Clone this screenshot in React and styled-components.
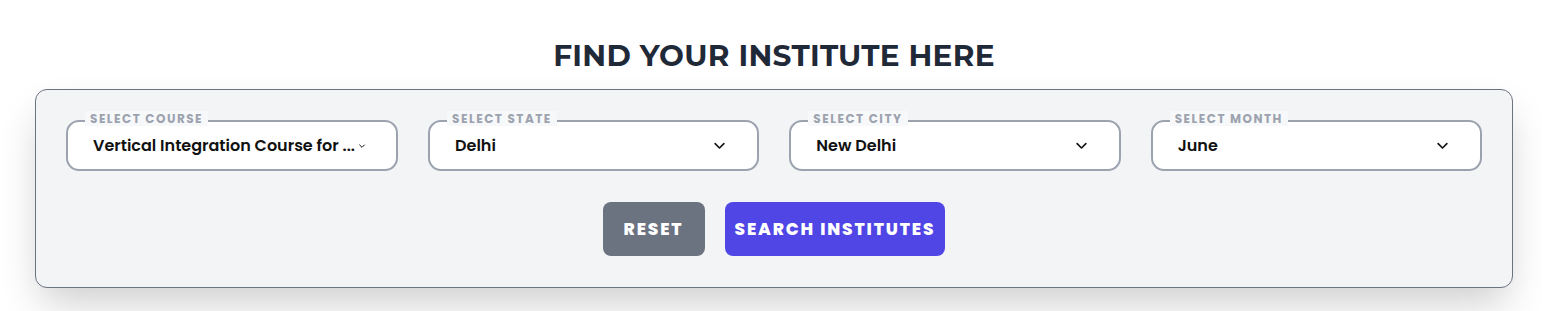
import React from "react";
import styled, { createGlobalStyle } from "styled-components";

const Global = createGlobalStyle`
  html, body { margin: 0; padding: 0; background: #ffffff; }
  * { box-sizing: border-box; }
`;

const Page = styled.div`
  padding: 37px 29px 30px 35px;
  font-family: "Poppins", "Inter", "Liberation Sans", sans-serif;
`;

const Heading = styled.h2`
  margin: 0 0 16px;
  text-align: center;
  font-family: "Montserrat", "Inter", "Liberation Sans", sans-serif;
  font-weight: 700;
  font-size: 29.5px;
  line-height: 36px;
  color: #1f2937;
  letter-spacing: 0.3px;
`;

const Card = styled.div`
  background: #f3f4f6;
  border: 1px solid #6b7280;
  border-radius: 12px;
  padding: 30px 30px 31px;
  box-shadow: 0 20px 40px -6px rgba(0, 0, 0, 0.2);
`;

const Grid = styled.div`
  display: grid;
  grid-template-columns: repeat(4, 1fr);
  gap: 30px;
`;

const Field = styled.div`
  position: relative;
  height: 51px;
  background: #ffffff;
  border: 2px solid #9ca3af;
  border-radius: 13px;
  display: flex;
  align-items: center;
  padding: 0 30px 0 25px;
`;

const Label = styled.span`
  position: absolute;
  top: -11px;
  left: 17px;
  padding: 0 5px;
  background: #f7f8f9;
  font-size: 12px;
  line-height: 15px;
  font-weight: 700;
  letter-spacing: 1.5px;
  color: #9ca3af;
`;

const Value = styled.span`
  flex: ${(p) => (p.$shrink ? "0 1 auto" : "1")};
  min-width: 0;
  white-space: nowrap;
  overflow: hidden;
  text-overflow: ellipsis;
  font-size: 16px;
  font-weight: 600;
  color: #111111;
`;

const Chevron = ({ small }) => (
  <svg
    width={small ? 8 : 15}
    height={small ? 8 : 15}
    viewBox="0 0 24 24"
    fill="none"
    stroke="#111"
    strokeWidth={small ? 3 : 2.6}
    strokeLinecap="round"
    strokeLinejoin="round"
    style={{ flexShrink: 0, marginLeft: small ? 3 : 8 }}
  >
    <path d="M5 9l7 7 7-7" />
  </svg>
);

const Buttons = styled.div`
  display: flex;
  justify-content: center;
  gap: 20px;
  margin-top: 31px;
`;

const Button = styled.button`
  height: 54px;
  padding: 0 ${(p) => (p.$primary ? "10px" : "21px")};
  border: none;
  border-radius: 8px;
  background: ${(p) => (p.$primary ? "#4f46e5" : "#6b7280")};
  color: #ffffff;
  font-family: "Poppins", "Inter", "Liberation Sans", sans-serif;
  font-size: 17px;
  font-weight: 800;
  letter-spacing: 1.85px;
  cursor: pointer;
`;

const fields = [
  { label: "SELECT COURSE", value: "Vertical Integration Course for ...", small: true },
  { label: "SELECT STATE", value: "Delhi" },
  { label: "SELECT CITY", value: "New Delhi" },
  { label: "SELECT MONTH", value: "June" },
];

export default function App() {
  return (
    <>
      <Global />
      <Page>
        <Heading>FIND YOUR INSTITUTE HERE</Heading>
        <Card>
          <Grid>
            {fields.map((f) => (
              <Field key={f.label}>
                <Label>{f.label}</Label>
                <Value $shrink={f.small}>{f.value}</Value>
                <Chevron small={f.small} />
              </Field>
            ))}
          </Grid>
          <Buttons>
            <Button>RESET</Button>
            <Button $primary>SEARCH INSTITUTES</Button>
          </Buttons>
        </Card>
      </Page>
    </>
  );
}
